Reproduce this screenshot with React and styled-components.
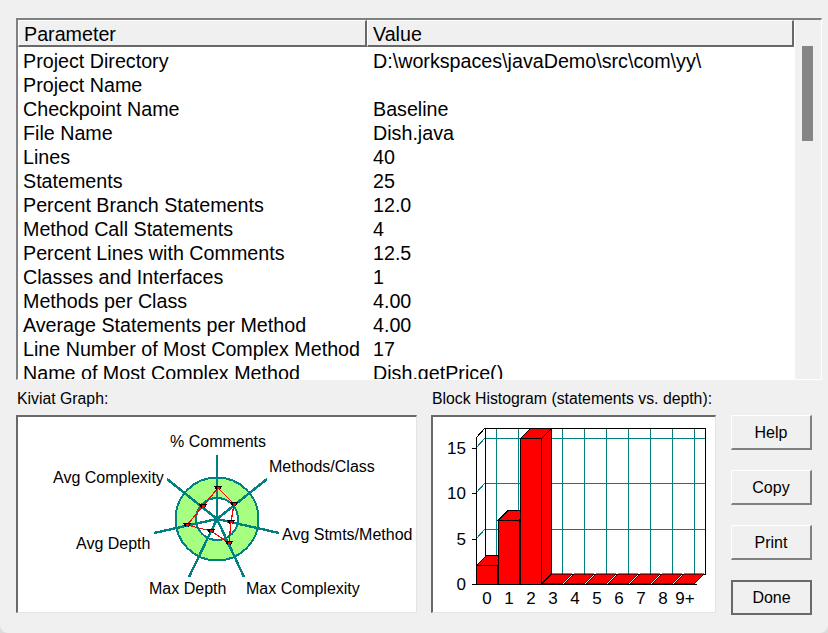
import React from 'react';
import styled, { createGlobalStyle } from 'styled-components';

const ROWS = [
    ['Project Directory', 'D:\\workspaces\\javaDemo\\src\\com\\yy\\'],
    ['Project Name', ''],
    ['Checkpoint Name', 'Baseline'],
    ['File Name', 'Dish.java'],
    ['Lines', '40'],
    ['Statements', '25'],
    ['Percent Branch Statements', '12.0'],
    ['Method Call Statements', '4'],
    ['Percent Lines with Comments', '12.5'],
    ['Classes and Interfaces', '1'],
    ['Methods per Class', '4.00'],
    ['Average Statements per Method', '4.00'],
    ['Line Number of Most Complex Method', '17'],
    ['Name of Most Complex Method', 'Dish.getPrice()'],
];

const TEAL = '#008080';

// spoke ends, in the kiviat svg's own coords (panel origin is 18,417)
const CX = 199, CY = 102;
const SPOKES = [
    [199, 38], [249, 62], [261, 116], [226, 160], [171, 160], [136, 116], [149, 62],
];
const POINTS = [
    [200, 71], [216, 87], [213, 105], [211, 126], [193, 114], [169, 108], [185, 89],
];
const KIVIAT_LABELS = [
    ['% Comments', 152, 30],
    ['Methods/Class', 251, 55],
    ['Avg Complexity', 35, 66],
    ['Avg Stmts/Method', 264, 123],
    ['Avg Depth', 58, 132],
    ['Max Depth', 131, 177],
    ['Max Complexity', 228, 177],
];

function Kiviat() {
    return (
        <ChartSvg width="399" height="195" viewBox="0 0 399 195">
            <g shapeRendering="crispEdges">
                <circle cx={CX} cy={CY} r="41.5" fill="#a6ff80" stroke={TEAL} strokeWidth="2" />
                <circle cx={CX} cy={CY} r="21" fill="#fff" stroke={TEAL} strokeWidth="2" />
                {SPOKES.map(([x, y]) => (
                    <line key={x + '-' + y} x1={CX} y1={CY} x2={x} y2={y} stroke={TEAL} strokeWidth="2.4" />
                ))}
                <polygon points={POINTS.map(p => p.join(',')).join(' ')} fill="none" stroke="#f00" strokeWidth="1.2" />
                {POINTS.map(([x, y]) => (
                    <g key={x + '-' + y}>
                        <path d={`M${x - 4} ${y - 2}h8l-2 4.5l-2 -1.5l-2 1.5z`} fill="#000" />
                        <rect x={x - 1.5} y={y - 1} width="3" height="2" fill="#f00" />
                    </g>
                ))}
            </g>
            {KIVIAT_LABELS.map(([t, x, y]) => (
                <ChartLabel key={t} x={x} y={y}>{t}</ChartLabel>
            ))}
        </ChartSvg>
    );
}

// histogram, coords relative to the panel's inner area (origin 433,417)
const BASE = 167, UNIT = 9.07, DEPTH = 10;
const BARS = [
    [43, 64, 2], [65, 86, 7], [87, 108, 16],
    [109, 130, 0], [131, 152, 0], [153, 174, 0], [175, 196, 0], [197, 218, 0], [219, 240, 0], [241, 262, 0],
];
const GRID_X = [63, 85, 107, 129, 151, 173, 195, 217, 239, 261];
const XL = ['0', '1', '2', '3', '4', '5', '6', '7', '8', '9+'];

function Histogram() {
    return (
        <ChartSvg width="281" height="195" viewBox="0 0 281 195">
            <g shapeRendering="crispEdges">
                {GRID_X.map(x => (
                    <line key={x} x1={x} y1={11} x2={x} y2={BASE - DEPTH} stroke={TEAL} />
                ))}
                {[21, 66, 112].map(y => (
                    <g key={y}>
                        <line x1={52} y1={y} x2={272} y2={y} stroke={TEAL} />
                        <line x1={43} y1={y + 10} x2={52} y2={y} stroke={TEAL} />
                        <line x1={39} y1={y + 10} x2={43} y2={y + 10} stroke="#000" />
                    </g>
                ))}
                <path d={`M43 21L52 11H272V157H52V11M43 21V${BASE}M39 ${BASE}H43`} fill="none" stroke="#000" />
            </g>
            {BARS.map(([x1, x2, v]) => {
                const top = BASE - v * UNIT;
                if (v === 0) {
                    return (
                        <polygon key={x1} points={`${x1},${BASE} ${x2 - 1},${BASE} ${x2 + DEPTH - 1},${BASE - DEPTH} ${x1 + DEPTH},${BASE - DEPTH}`}
                            fill="#f00" stroke="#000" />
                    );
                }
                return (
                    <g key={x1} stroke="#000" fill="#f00" shapeRendering="crispEdges">
                        <polygon points={`${x1},${top} ${x1 + DEPTH},${top - DEPTH} ${x2 + DEPTH},${top - DEPTH} ${x2},${top}`} />
                        <polygon points={`${x2},${top} ${x2 + DEPTH},${top - DEPTH} ${x2 + DEPTH},${BASE - DEPTH} ${x2},${BASE}`} />
                        <rect x={x1} y={top} width={x2 - x1} height={BASE - top} />
                    </g>
                );
            })}
            <line x1={39} y1={BASE} x2={264} y2={BASE} stroke="#000" shapeRendering="crispEdges" />
            {[['15', 31], ['10', 76], ['5', 122], ['0', 167]].map(([t, y]) => (
                <ChartLabel key={t} $size={17} x={33} y={y + 6} textAnchor="end">{t}</ChartLabel>
            ))}
            {XL.map((t, i) => (
                <ChartLabel key={t} $size={17} x={54 + i * 22} y={187} textAnchor="middle">{t}</ChartLabel>
            ))}
        </ChartSvg>
    );
}

export default function App() {
    return (
        <>
            <GlobalStyle />
            <Dialog>
                <TablePanel>
                    <TableArea>
                        <Header>
                            <HeaderCell $width={349}>Parameter</HeaderCell>
                            <HeaderCell $grow>Value</HeaderCell>
                        </Header>
                        <Body>
                            {ROWS.map(([name, value]) => (
                                <Row key={name}>
                                    <Name>{name}</Name>
                                    <span>{value}</span>
                                </Row>
                            ))}
                        </Body>
                    </TableArea>
                    <ScrollTrack>
                        <ScrollThumb />
                    </ScrollTrack>
                </TablePanel>
                <Bottom>
                    <Group $width={401}>
                        <Caption>Kiviat Graph:</Caption>
                        <ChartPanel><Kiviat /></ChartPanel>
                    </Group>
                    <Group $width={285}>
                        <Caption>Block Histogram (statements vs. depth):</Caption>
                        <ChartPanel><Histogram /></ChartPanel>
                    </Group>
                    <Buttons>
                        <Button>Help</Button>
                        <Button>Copy</Button>
                        <Button>Print</Button>
                        <Button $default>Done</Button>
                    </Buttons>
                </Bottom>
            </Dialog>
        </>
    );
}

const GlobalStyle = createGlobalStyle`
    html, body {
        margin: 0;
        padding: 0;
        background: #dcdcdc;
        overflow: hidden;
    }
    body {
        font-family: "Liberation Sans", Arial, sans-serif;
        color: #000;
    }
`;
const Dialog = styled.div`
    width: 828px;
    height: 633px;
    box-sizing: border-box;
    padding: 18px 0 0 16px;
    background: #f0f0f0;
    border-radius: 0 0 8px 8px;
    overflow: hidden;
`;
const TablePanel = styled.div`
    display: flex;
    width: 806px;
    height: 362px;
    box-sizing: border-box;
    border-top: 2px solid #808080;
    border-left: 2px solid #808080;
    border-right: 1px solid #fff;
    border-bottom: 1px solid #fff;
`;
const TableArea = styled.div`
    display: flex;
    flex-direction: column;
    width: 777px;
    background: #fff;
`;
const Header = styled.div`
    display: flex;
    flex: none;
    height: 27px;
    margin-right: 1px;
`;
const HeaderCell = styled.div`
    box-sizing: border-box;
    width: ${p => p.$width ? p.$width + 'px' : 'auto'};
    flex: ${p => p.$grow ? 1 : 'none'};
    padding: 2px 0 0 5px;
    background: #f0f0f0;
    border-top: 1px solid #fff;
    border-left: 1px solid #fff;
    border-right: 2px solid #696969;
    border-bottom: 2px solid #696969;
    font-size: 19.7px;
    line-height: 23px;
`;
const Body = styled.div`
    flex: 1;
    min-height: 0;
    overflow: hidden;
    padding-top: 2px;
`;
const Row = styled.div`
    display: flex;
    height: 24px;
    font-size: 19.7px;
    line-height: 24px;
    white-space: nowrap;
`;
const Name = styled.span`
    flex: none;
    width: 350px;
    padding-left: 5px;
    box-sizing: border-box;
    margin-right: 5px;
`;
const ScrollTrack = styled.div`
    flex: 1;
    padding: 26px 0 0 7px;
    background: #f0f0f0;
`;
const ScrollThumb = styled.div`
    width: 11px;
    height: 95px;
    background: #858585;
`;
const Bottom = styled.div`
    display: flex;
    margin-top: 7px;
`;
const Group = styled.div`
    flex: none;
    width: ${p => p.$width}px;
    margin-right: 14px;
`;
const Caption = styled.div`
    height: 28px;
    font-size: 15.8px;
    line-height: 23px;
    margin-left: 1px;
    white-space: nowrap;
`;
const ChartPanel = styled.div`
    box-sizing: border-box;
    height: 198px;
    background: #fff;
    border-top: 2px solid #696969;
    border-left: 2px solid #696969;
    border-right: 1px solid #e3e3e3;
    border-bottom: 1px solid #e3e3e3;
`;
const ChartSvg = styled.svg`
    display: block;
`;
const ChartLabel = styled.text`
    font-family: "Liberation Sans", Arial, sans-serif;
    font-size: ${p => p.$size || 16}px;
    fill: #000;
`;
const Buttons = styled.div`
    display: flex;
    flex-direction: column;
    gap: 20px;
    margin: 28px 0 0 1px;
`;
const Button = styled.button`
    width: 81px;
    height: 35px;
    box-sizing: border-box;
    padding: ${p => p.$default ? '0' : '2px 0 0'};
    background: #f0f0f0;
    font-family: "Liberation Sans", Arial, sans-serif;
    font-size: 16px;
    color: #000;
    border-style: solid;
    border-width: ${p => p.$default ? '2px' : '1px 2px 2px 1px'};
    border-color: ${p => p.$default ? '#696969' : '#fff #808080 #808080 #fff'};
`;
